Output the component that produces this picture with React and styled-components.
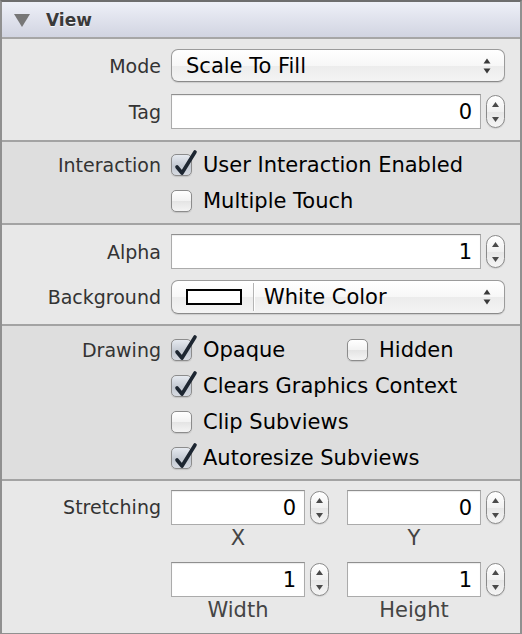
import React from 'react';
import styled, { createGlobalStyle } from 'styled-components';

const GlobalStyle = createGlobalStyle`
  html, body {
    margin: 0;
    padding: 0;
    background: #e8e8e8;
  }
  body {
    font-family: "DejaVu Sans", "Liberation Sans", sans-serif;
  }
`;

const Panel = styled.div`
  box-sizing: border-box;
  width: 522px;
  height: 634px;
  display: flex;
  flex-direction: column;
  background: #e8e8e8;
  border: 2px solid #909090;
  border-top-color: #6e6e6e;
`;

const Header = styled.div`
  height: 35px;
  flex-shrink: 0;
  display: flex;
  align-items: center;
  gap: 15px;
  padding-left: 11px;
  background: linear-gradient(#eef0f8, #d1d4e1);
  border-bottom: 2px solid #a6a6a6;
`;

const Title = styled.span`
  font-size: 17px;
  font-weight: bold;
  color: #3a3a3a;
  text-shadow: 0 1px 0 rgba(255, 255, 255, 0.8);
`;

const Section = styled.div`
  display: flex;
  flex-direction: column;
  gap: ${(p) => p.$gap || 0}px;
  padding: ${(p) => p.$pad || '0'};
  padding-right: 15px;
  background: ${(p) => (p.$dark ? '#dedede' : '#e8e8e8')};
  border-top: ${(p) => (p.$first ? 'none' : '2px solid #a3a3a3')};
  flex: ${(p) => (p.$fill ? 1 : 'none')};
`;

const Row = styled.div`
  display: grid;
  grid-template-columns: 159px 1fr;
  column-gap: 10px;
  align-items: center;
`;

const Label = styled.span`
  text-align: right;
  font-size: 19px;
  color: #333;
  align-self: ${(p) => (p.$top ? 'start' : 'center')};
  line-height: ${(p) => (p.$top ? '35px' : 'normal')};
`;

const PopUp = styled.div`
  box-sizing: border-box;
  height: ${(p) => p.$h || 33}px;
  display: flex;
  align-items: center;
  padding: 0 13px 0 14px;
  border: 1px solid #9b9b9b;
  border-bottom-color: #8a8a8a;
  border-radius: 7px;
  background: linear-gradient(#ffffff 0%, #f7f7f7 50%, #ececec 51%, #f4f4f4 100%);
  box-shadow: 0 1px 1px rgba(0, 0, 0, 0.12);
`;

const PopUpText = styled.span`
  flex: 1;
  font-size: 21px;
  color: #000;
`;

const Swatch = styled.span`
  box-sizing: border-box;
  width: 56px;
  height: 16px;
  border: 2px solid #000;
  background: #fff;
`;

const Divider = styled.span`
  width: 1px;
  align-self: stretch;
  margin: 2px 10px 2px 11px;
  background: #b4b4b4;
  box-shadow: 1px 0 0 #ffffff;
`;

const FieldGroup = styled.div`
  display: flex;
  align-items: center;
  gap: 5px;
`;

const TextField = styled.div`
  box-sizing: border-box;
  flex: 1;
  height: 35px;
  display: flex;
  align-items: center;
  justify-content: flex-end;
  padding-right: 8px;
  font-size: 21px;
  color: #000;
  background: #fff;
  border: 1px solid #ababab;
  border-top-color: #8f8f8f;
  box-shadow: inset 0 1px 1px rgba(0, 0, 0, 0.08);
`;

const StepperBox = styled.span`
  box-sizing: border-box;
  width: 19px;
  height: 33px;
  display: flex;
  border: 1px solid #8a8a8a;
  border-radius: 10px;
  background: linear-gradient(#ffffff, #f1f1f1 50%, #e6e6e6 51%, #f5f5f5);
  box-shadow: 0 1px 1px rgba(0, 0, 0, 0.1);
`;

const CheckLine = styled.div`
  display: flex;
  align-items: center;
  gap: 11px;
  height: 36px;
`;

const CheckBox = styled.span`
  position: relative;
  box-sizing: border-box;
  width: 21px;
  height: 22px;
  flex-shrink: 0;
  border: 1px solid #8c8c8c;
  border-radius: 5px;
  background: ${(p) =>
    p.$checked
      ? 'linear-gradient(#e6eaf0, #c3c9d2 55%, #d6dae1)'
      : 'linear-gradient(#ffffff, #f2f2f2 50%, #e4e4e4 51%, #f4f4f4)'};
  box-shadow: 0 1px 1px rgba(0, 0, 0, 0.12);
`;

const CheckMark = styled.svg`
  position: absolute;
  left: 0;
  top: -8px;
  overflow: visible;
`;

const CheckText = styled.span`
  font-size: 21px;
  color: #000;
  white-space: nowrap;
`;

const Pair = styled.div`
  display: grid;
  grid-template-columns: ${(p) => p.$cols || '158px 158px'};
  column-gap: 18px;
`;

const Cell = styled.div`
  display: flex;
  flex-direction: column;
`;

const SubLabel = styled.span`
  height: 26px;
  width: 134px;
  display: flex;
  align-items: center;
  justify-content: center;
  font-size: 21px;
  color: #444;
`;

const Disclosure = () => (
  <svg width="18" height="16" viewBox="0 0 18 16">
    <polygon points="1,2 17,2 9,15" fill="#777" />
  </svg>
);

const PopUpArrows = () => (
  <svg width="8" height="16" viewBox="0 0 8 16">
    <polygon points="0.5,5.5 4,0.5 7.5,5.5" fill="#3a3a3a" />
    <polygon points="0.5,10.5 7.5,10.5 4,15.5" fill="#3a3a3a" />
  </svg>
);

const Stepper = () => (
  <StepperBox>
    <svg width="17" height="31" viewBox="0 0 17 31">
      <polygon points="5,11 8.5,6 12,11" fill="#4a4a4a" />
      <polygon points="5,21 12,21 8.5,26" fill="#4a4a4a" />
    </svg>
  </StepperBox>
);

const Check = ({ checked, children }) => (
  <CheckLine>
    <CheckBox $checked={checked}>
      {checked && (
        <CheckMark width="26" height="30" viewBox="0 0 26 30">
          <path
            d="M5 20 L10 26 L23 5"
            fill="none"
            stroke="#1d2631"
            strokeWidth="3.6"
            strokeLinecap="round"
            strokeLinejoin="round"
          />
        </CheckMark>
      )}
    </CheckBox>
    <CheckText>{children}</CheckText>
  </CheckLine>
);

const NumberField = ({ value }) => (
  <FieldGroup>
    <TextField>{value}</TextField>
    <Stepper />
  </FieldGroup>
);

const App = () => (
  <>
    <GlobalStyle />
    <Panel>
      <Header>
        <Disclosure />
        <Title>View</Title>
      </Header>

      <Section $first $pad="10px 0 11px" $gap={12}>
        <Row>
          <Label>Mode</Label>
          <PopUp>
            <PopUpText>Scale To Fill</PopUpText>
            <PopUpArrows />
          </PopUp>
        </Row>
        <Row>
          <Label>Tag</Label>
          <NumberField value="0" />
        </Row>
      </Section>

      <Section $dark $pad="5px 0 4px">
        <Row>
          <Label>Interaction</Label>
          <Check checked>User Interaction Enabled</Check>
        </Row>
        <Row>
          <span />
          <Check>Multiple Touch</Check>
        </Row>
      </Section>

      <Section $pad="9px 0 10px" $gap={11}>
        <Row>
          <Label>Alpha</Label>
          <NumberField value="1" />
        </Row>
        <Row>
          <Label>Background</Label>
          <PopUp $h={34}>
            <Swatch />
            <Divider />
            <PopUpText>White Color</PopUpText>
            <PopUpArrows />
          </PopUp>
        </Row>
      </Section>

      <Section $dark $pad="6px 0 3px">
        <Row>
          <Label>Drawing</Label>
          <Pair $cols="158px 1fr">
            <Check checked>Opaque</Check>
            <Check>Hidden</Check>
          </Pair>
        </Row>
        <Row>
          <span />
          <Check checked>Clears Graphics Context</Check>
        </Row>
        <Row>
          <span />
          <Check>Clip Subviews</Check>
        </Row>
        <Row>
          <span />
          <Check checked>Autoresize Subviews</Check>
        </Row>
      </Section>

      <Section $fill $pad="9px 0 10px" $gap={11}>
        <Row>
          <Label $top>Stretching</Label>
          <Pair>
            <Cell>
              <NumberField value="0" />
              <SubLabel>X</SubLabel>
            </Cell>
            <Cell>
              <NumberField value="0" />
              <SubLabel>Y</SubLabel>
            </Cell>
          </Pair>
        </Row>
        <Row>
          <span />
          <Pair>
            <Cell>
              <NumberField value="1" />
              <SubLabel>Width</SubLabel>
            </Cell>
            <Cell>
              <NumberField value="1" />
              <SubLabel>Height</SubLabel>
            </Cell>
          </Pair>
        </Row>
      </Section>
    </Panel>
  </>
);

export default App;
